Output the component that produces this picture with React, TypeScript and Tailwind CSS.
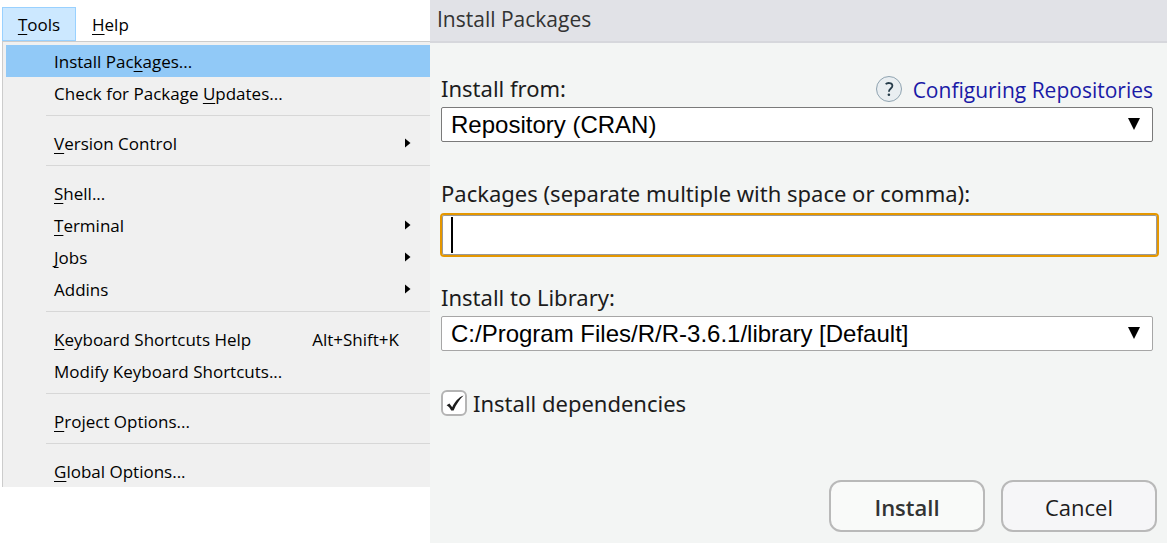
import { Fragment, ReactNode } from "react";

type MenuItem = {
  before?: string;
  mnemonic?: string;
  after: string;
  shortcut?: string;
  submenu?: boolean;
  active?: boolean;
};

const groups: MenuItem[][] = [
  [
    { before: "Install Pac", mnemonic: "k", after: "ages...", active: true },
    { before: "Check for Package ", mnemonic: "U", after: "pdates..." },
  ],
  [{ mnemonic: "V", after: "ersion Control", submenu: true }],
  [
    { mnemonic: "S", after: "hell..." },
    { mnemonic: "T", after: "erminal", submenu: true },
    { mnemonic: "J", after: "obs", submenu: true },
    { after: "Addins", submenu: true },
  ],
  [
    { mnemonic: "K", after: "eyboard Shortcuts Help", shortcut: "Alt+Shift+K" },
    { after: "Modify Keyboard Shortcuts..." },
  ],
  [{ mnemonic: "P", after: "roject Options..." }],
  [{ mnemonic: "G", after: "lobal Options..." }],
];

function Mnemonic({ children }: { children: ReactNode }) {
  return (
    <span className="underline decoration-1 underline-offset-3 [text-decoration-skip-ink:none]">
      {children}
    </span>
  );
}

function MenuRow({ item }: { item: MenuItem }) {
  return (
    <button
      type="button"
      role="menuitem"
      className={
        "ml-[3px] flex h-8 items-center pt-0.5 pr-[19px] pl-12 text-left whitespace-pre " +
        (item.active ? "bg-[#91c9f7]" : "")
      }
    >
      <span className="flex-1">
        {item.before}
        {item.mnemonic && <Mnemonic>{item.mnemonic}</Mnemonic>}
        {item.after}
      </span>
      {item.shortcut && <span className="pr-3">{item.shortcut}</span>}
      {item.submenu && (
        <svg className="mb-0.5" width="6" height="10" viewBox="0 0 6 10" aria-hidden="true">
          <path d="M0 0.5 L5.5 5 L0 9.5Z" fill="#000" />
        </svg>
      )}
    </button>
  );
}

function ToolsMenu() {
  return (
    <section className="w-[430px] shrink-0 pt-[7px] pl-0.5 text-[17px] leading-6 text-black">
      <div role="menubar" className="flex h-[34px]">
        <button
          type="button"
          className="w-[74px] border border-[#99d1ff] bg-[#cce8ff] pt-0.5"
        >
          <Mnemonic>T</Mnemonic>ools
        </button>
        <button type="button" className="px-4 pt-0.5">
          <Mnemonic>H</Mnemonic>elp
        </button>
      </div>
      <div
        role="menu"
        className="flex flex-col border-t border-l border-[#cccccc] bg-[#f0f0f0] pt-[3px]"
      >
        {groups.map((group, i) => (
          <Fragment key={i}>
            {i > 0 && <hr className="mt-1.5 mb-[11px] ml-[43px] border-[#d7d7d7]" />}
            {group.map((item) => (
              <MenuRow key={item.after} item={item} />
            ))}
          </Fragment>
        ))}
      </div>
    </section>
  );
}

function SelectBox({
  id,
  value,
  border,
}: {
  id: string;
  value: string;
  border: string;
}) {
  return (
    <div className="relative mr-1.5 ml-px">
      <select
        id={id}
        className={
          "block h-[35px] w-full appearance-none rounded-xs border bg-white pr-10 pl-[9px] font-['Liberation_Sans',sans-serif] text-2xl leading-7 text-black " +
          border
        }
      >
        <option>{value}</option>
      </select>
      <svg
        className="pointer-events-none absolute top-[11px] right-[13px]"
        width="12"
        height="12"
        viewBox="0 0 12 12"
        aria-hidden="true"
      >
        <path d="M0 0H12L6 12Z" fill="#000" />
      </svg>
    </div>
  );
}

function InstallDialog() {
  return (
    <section className="flex min-w-0 flex-1 flex-col bg-[#f3f5f4] font-['Noto_Sans',sans-serif] text-[22px] leading-8 text-[#1c1c1c]">
      <h1 className="h-[43px] border-b-2 border-[#d6d7dc] bg-[#e1e2e7] pt-[3px] pl-[7px] font-['Open_Sans',sans-serif] text-[21px] text-[#333333]">
        Install Packages
      </h1>
      <form className="flex flex-1 flex-col pt-[29px] pr-2 pb-[11px] pl-2.5">
        <div className="mr-1.5 ml-px flex h-[35px] justify-between">
          <label htmlFor="source">Install from:</label>
          <a
            href="#repositories"
            className="flex items-center gap-2.5 font-['Open_Sans',sans-serif] text-[21px] text-[#1a1aa6]"
          >
            <svg width="28" height="28" viewBox="0 0 28 28" aria-hidden="true">
              <circle cx="14" cy="13" r="12.5" fill="#e9eef1" stroke="#8fa3b0" />
              <path
                d="M10.7 8.2C12 6.6 17.4 6.2 17.4 9.8C17.4 12.5 13.9 12.6 13.9 15.8"
                fill="none"
                stroke="#263c4a"
                strokeWidth="1.8"
              />
              <circle cx="13.9" cy="18.8" r="1.3" fill="#263c4a" />
            </svg>
            Configuring Repositories
          </a>
        </div>
        <SelectBox id="source" value="Repository (CRAN)" border="border-[#7a7a7a]" />

        <label htmlFor="packages" className="mt-[35px] ml-px">
          Packages (separate multiple with space or comma):
        </label>
        <div className="relative mt-1">
          <input
            id="packages"
            type="text"
            className="block h-11 w-full rounded-sm border-2 border-[#e59700] bg-white px-2.5 caret-transparent inset-ring inset-ring-[#999999] outline-none"
          />
          <span className="pointer-events-none absolute top-1 left-[11px] h-9 w-0.5 bg-black" />
        </div>

        <label htmlFor="library" className="mt-6 ml-px">
          Install to Library:
        </label>
        <div className="mt-[3px]">
          <SelectBox
            id="library"
            value="C:/Program Files/R/R-3.6.1/library [Default]"
            border="border-[#a6a6a6]"
          />
        </div>

        <label className="mt-9 ml-px flex items-center gap-1.5">
          <span className="relative">
            <input
              type="checkbox"
              defaultChecked
              className="peer block size-[26px] appearance-none rounded-md border-2 border-[#b4b4b4] bg-white"
            />
            <svg
              className="pointer-events-none absolute top-0 left-0 hidden peer-checked:block"
              width="26"
              height="26"
              viewBox="0 0 26 26"
              aria-hidden="true"
            >
              <path
                d="M5.6 15.2L8.4 13.6L11.2 17.2C13.6 12.2 17.4 7.4 22.6 5.6C18.6 9.4 15.2 14.6 12.6 20.4H10.2C8.9 18 7.6 16.2 5.6 15.2Z"
                fill="#1c1c1c"
              />
            </svg>
          </span>
          Install dependencies
        </label>

        <div className="mt-auto mr-0.5 flex justify-end gap-4 font-['Open_Sans',sans-serif]">
          <button
            type="button"
            className="h-[52px] w-[156px] rounded-xl border-2 border-[#b9b9b9] bg-[#f9faf9] pt-0.5 font-semibold text-[#333333]"
          >
            Install
          </button>
          <button
            type="button"
            className="h-[52px] w-[156px] rounded-xl border-2 border-[#b9b9b9] bg-[#f6f6f8] pt-0.5"
          >
            Cancel
          </button>
        </div>
      </form>
    </section>
  );
}

export default function App() {
  return (
    <main className="flex min-h-screen bg-white font-['Open_Sans','Noto_Sans',sans-serif]">
      <ToolsMenu />
      <InstallDialog />
    </main>
  );
}
